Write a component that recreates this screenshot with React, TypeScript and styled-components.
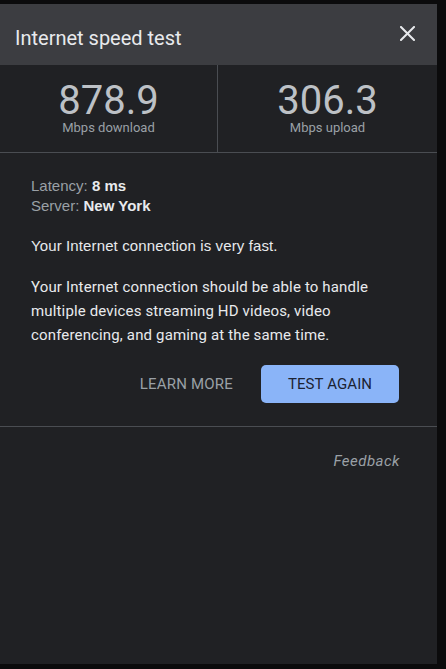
import React from "react";
import styled, { createGlobalStyle } from "styled-components";

const Global = createGlobalStyle`
  html, body { margin: 0; padding: 0; background: #0b0b0c; }
  body { font-family: Roboto, "Liberation Sans", Arial, sans-serif; }
  * { box-sizing: border-box; }
`;

const Page = styled.div`
  padding-top: 4px;
  height: 669px;
  overflow: hidden;
`;

const Panel = styled.div`
  width: 437px;
  height: 660px;
  background: #202124;
  display: flex;
  flex-direction: column;
`;

const Header = styled.div`
  height: 61px;
  background: #3c3d41;
  display: flex;
  align-items: center;
  justify-content: space-between;
  padding: 7px 22px 0 15px;
`;

const Title = styled.h1`
  margin: 0;
  font-family: Roboto, sans-serif;
  font-size: 20px;
  font-weight: 400;
  color: #e8eaed;
  line-height: 24px;
`;

const CloseButton = styled.button`
  border: 0;
  background: transparent;
  padding: 0;
  margin-top: -9px;
  width: 15px;
  height: 15px;
  display: flex;
  cursor: pointer;
`;

const Stats = styled.div`
  display: grid;
  grid-template-columns: 217px 1px 1fr;
  border-bottom: 1px solid #4a4d52;
`;

const StatCell = styled.div`
  display: flex;
  flex-direction: column;
  align-items: center;
  padding: 18px 0 16px;
`;

const VDivider = styled.div`
  background: #4a4d52;
`;

const StatValue = styled.div`
  font-family: Roboto, sans-serif;
  font-size: 40px;
  font-weight: 400;
  line-height: 36px;
  color: #bdc1c6;
`;

const StatLabel = styled.div`
  margin-top: 1px;
  font-family: Roboto, sans-serif;
  font-size: 13px;
  line-height: 16px;
  color: #9aa0a6;
`;

const Body = styled.div`
  padding: 23px 38px 23px 31px;
  border-bottom: 1px solid #4a4d52;
`;

const InfoLine = styled.div`
  font-family: "Liberation Sans", Arial, sans-serif;
  font-size: 15px;
  line-height: 20px;
  color: #9aa0a6;
`;

const InfoValue = styled.span`
  color: #e8eaed;
  font-weight: 700;
`;

const Summary = styled.p`
  margin: 20px 0 0;
  font-family: "Liberation Sans", Arial, sans-serif;
  font-size: 15px;
  line-height: 20px;
  letter-spacing: 0.12px;
  color: #e8eaed;
`;

const Detail = styled.p`
  margin: 19px 0 0;
  font-family: Roboto, sans-serif;
  font-size: 15px;
  line-height: 24px;
  letter-spacing: 0.15px;
  color: #e8eaed;
`;

const Actions = styled.div`
  margin-top: 18px;
  display: flex;
  justify-content: flex-end;
  align-items: center;
  gap: 16px;
`;

const Button = styled.button<{ $primary?: boolean }>`
  height: 38px;
  border-radius: 5px;
  border: 0;
  font-family: Roboto, sans-serif;
  font-size: 15px;
  font-weight: 400;
  text-transform: uppercase;
  cursor: pointer;
  padding: ${(p) => (p.$primary ? "0" : "0 12px")};
  width: ${(p) => (p.$primary ? "138px" : "auto")};
  background: ${(p) => (p.$primary ? "#8ab4f8" : "transparent")};
  color: ${(p) => (p.$primary ? "#1c2333" : "#9aa0a6")};
  letter-spacing: ${(p) => (p.$primary ? "0.1px" : "0.2px")};
`;

const Footer = styled.div`
  padding: 24px 37px 0 0;
  display: flex;
  justify-content: flex-end;
`;

const FeedbackLink = styled.a`
  font-family: Roboto, sans-serif;
  font-style: italic;
  font-size: 15px;
  line-height: 20px;
  letter-spacing: 0.5px;
  color: #9aa0a6;
  text-decoration: none;
`;

export default function App() {
  return (
    <Page>
      <Global />
      <Panel>
        <Header>
          <Title>Internet speed test</Title>
          <CloseButton aria-label="Close">
            <svg width="15" height="15" viewBox="0 0 15 15">
              <path d="M1 1 L14 14 M14 1 L1 14" stroke="#e8eaed" strokeWidth="2" strokeLinecap="square" />
            </svg>
          </CloseButton>
        </Header>
        <Stats>
          <StatCell>
            <StatValue>878.9</StatValue>
            <StatLabel>Mbps download</StatLabel>
          </StatCell>
          <VDivider />
          <StatCell>
            <StatValue>306.3</StatValue>
            <StatLabel>Mbps upload</StatLabel>
          </StatCell>
        </Stats>
        <Body>
          <InfoLine>
            Latency: <InfoValue>8 ms</InfoValue>
          </InfoLine>
          <InfoLine>
            Server: <InfoValue>New York</InfoValue>
          </InfoLine>
          <Summary>Your Internet connection is very fast.</Summary>
          <Detail>
            Your Internet connection should be able to handle multiple devices streaming HD videos, video
            conferencing, and gaming at the same time.
          </Detail>
          <Actions>
            <Button>Learn more</Button>
            <Button $primary>Test again</Button>
          </Actions>
        </Body>
        <Footer>
          <FeedbackLink href="#">Feedback</FeedbackLink>
        </Footer>
      </Panel>
    </Page>
  );
}
